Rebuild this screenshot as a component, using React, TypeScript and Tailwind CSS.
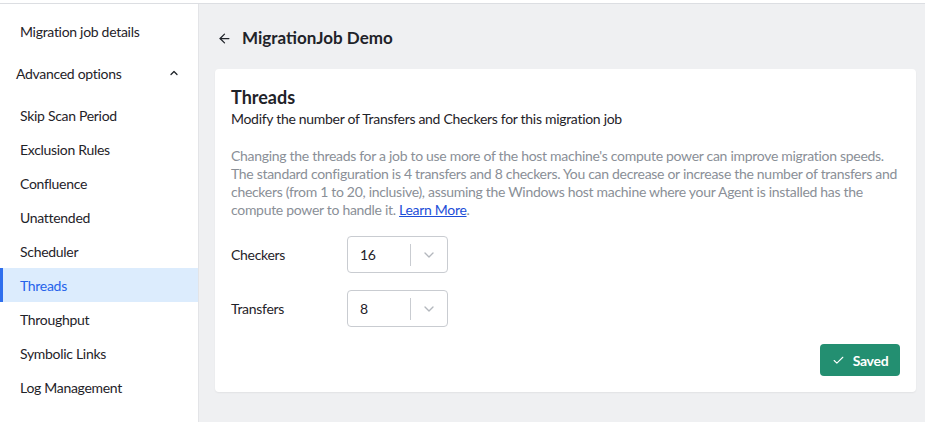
import { ArrowLeft, Check, ChevronDown, ChevronUp } from 'lucide-react';

const items = [
  'Skip Scan Period',
  'Exclusion Rules',
  'Confluence',
  'Unattended',
  'Scheduler',
  'Threads',
  'Throughput',
  'Symbolic Links',
  'Log Management',
];

const Select = ({ value }: { value: string }) => (
  <div className="flex h-[37px] w-[101px] items-center rounded border border-[#c9ccd1] bg-white">
    <span className="flex-1 pl-[12px] text-[14px] text-[#1f2329]">{value}</span>
    <span className="h-[22px] w-px bg-[#c9ccd1]" />
    <span className="flex w-[36px] justify-center text-[#b3b7bd]">
      <ChevronDown size={16} strokeWidth={2} />
    </span>
  </div>
);

export default function App() {
  return (
    <div className="flex h-[422px] w-[925px] flex-col overflow-hidden bg-[#eff0f2] font-['Lato',sans-serif] tracking-[-0.3px] text-[#1f2329]">
      <div className="h-[4px] shrink-0 border-b border-[#dcdee2] bg-white" />
      <div className="flex flex-1">
        <aside className="w-[199px] shrink-0 border-r border-[#e3e4e7] bg-white pt-[14px] text-[14px]">
          <div className="flex h-[26px] items-center pl-[20px]">Migration job details</div>
          <div className="mt-[16px] flex h-[26px] items-center justify-between pl-[16px] pr-[18px]">
            <span>Advanced options</span>
            <ChevronUp size={12} strokeWidth={2.5} />
          </div>
          <div className="mt-[12px] flex flex-col">
            {items.map((label) =>
              label === 'Threads' ? (
                <div
                  key={label}
                  className="flex h-[34px] items-center border-l-[3px] border-[#2f6fed] bg-[#dcecfd] pl-[17px] text-[#2563eb]"
                >
                  {label}
                </div>
              ) : (
                <div key={label} className="flex h-[34px] items-center pl-[20px]">
                  {label}
                </div>
              )
            )}
          </div>
        </aside>

        <main className="flex-1 pl-[16px] pr-[9px]">
          <div className="flex h-[65px] items-center gap-[10px] pl-[2px] pt-[3px]">
            <ArrowLeft size={15} strokeWidth={2} />
            <h1 className="text-[17px] font-bold tracking-[0px]">MigrationJob Demo</h1>
          </div>
          <section className="rounded bg-white px-[16px] pt-[17px] pb-[16px] shadow-[0_1px_2px_rgba(0,0,0,0.06)]">
            <h2 className="text-[18px] font-bold leading-[22px] tracking-[0px]">Threads</h2>
            <p className="mt-[1px] text-[14px] leading-[20px]">
              Modify the number of Transfers and Checkers for this migration job
            </p>
            <p className="mt-[18px] text-[14px] leading-[18px] text-[#8a8f97]">
              Changing the threads for a job to use more of the host machine's compute power can improve migration
              speeds. The standard configuration is 4 transfers and 8 checkers. You can decrease or increase the
              number of transfers and checkers (from 1 to 20, inclusive), assuming the Windows host machine where
              your Agent is installed has the compute power to handle it.{' '}
              <a href="#" className="text-[#1d4ed8] underline">
                Learn More
              </a>
              .
            </p>
            <div className="mt-[17px] flex flex-col gap-[17px]">
              <div className="flex items-center">
                <span className="w-[116px] text-[14px]">Checkers</span>
                <Select value="16" />
              </div>
              <div className="flex items-center">
                <span className="w-[116px] text-[14px]">Transfers</span>
                <Select value="8" />
              </div>
            </div>
            <div className="mt-[17px] flex justify-end">
              <button className="flex h-[32px] w-[80px] items-center justify-center gap-[8px] rounded bg-[#238f71] text-[14px] font-bold text-white">
                <Check size={13} strokeWidth={2} />
                Saved
              </button>
            </div>
          </section>
        </main>
      </div>
    </div>
  );
}
